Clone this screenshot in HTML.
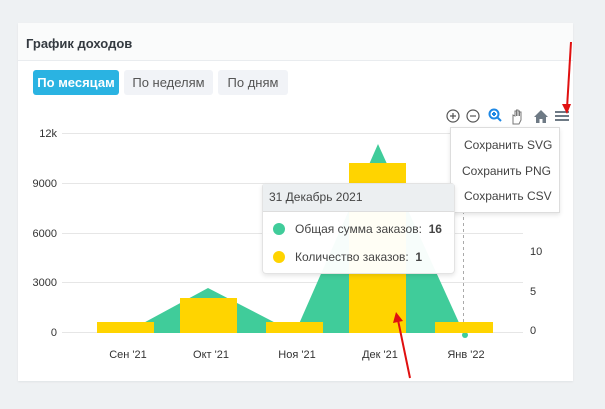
<!DOCTYPE html>
<html><head><meta charset="utf-8"><style>
body{margin:0;width:605px;height:409px;background:#eef1f3;font-family:"Liberation Sans",sans-serif;position:relative;overflow:hidden}
.card{position:absolute;left:18px;top:23px;width:555px;height:358px;background:#fff;box-shadow:0 1px 2px rgba(0,0,0,.06)}
.hdr{height:37px;border-bottom:1px solid #e9ecef;background:#fafbfb}
.hdr span{position:absolute;left:8px;top:13px;font-size:13px;font-weight:bold;color:#343a40}
.btn{position:absolute;top:47px;height:25px;border-radius:3px;font-size:13px;line-height:25px;text-align:center;background:#f1f3f7;color:#555}
.t{position:absolute;font-size:11px;color:#333}
</style></head><body>
<div class="card">
<div class="hdr"><span>График доходов</span></div>
<div class="btn" style="left:15px;width:86px;background:#2ab3e2;color:#fff;font-weight:bold">По месяцам</div>
<div class="btn" style="left:106px;width:89px">По неделям</div>
<div class="btn" style="left:200px;width:70px">По дням</div>
</div>
<svg width="605" height="409" style="position:absolute;left:0;top:0">
<g stroke="#e6e6e6" stroke-width="1">
<line x1="62" y1="133.5" x2="523" y2="133.5"/><line x1="62" y1="183.5" x2="523" y2="183.5"/>
<line x1="62" y1="233.5" x2="523" y2="233.5"/><line x1="62" y1="282.5" x2="523" y2="282.5"/>
<line x1="62" y1="332.5" x2="523" y2="332.5"/></g>
<line x1="463.5" y1="211" x2="463.5" y2="333" stroke="#aaa" stroke-dasharray="3,3"/>
<polygon points="125,333 208,288 295,333 378,144 465,336 465,333" fill="#40cc9a"/>
<circle cx="465" cy="335" r="3" fill="#40cc9a"/>
<g fill="#ffd400">
<rect x="97" y="322" width="57" height="11"/><rect x="180" y="298" width="57" height="35"/>
<rect x="266" y="322" width="57" height="11"/><rect x="349" y="163" width="57" height="170"/>
<rect x="435" y="322" width="58" height="11"/></g>
<g font-family="Liberation Sans" font-size="11" fill="#333">
<text x="57" y="137" text-anchor="end">12k</text><text x="57" y="187" text-anchor="end">9000</text>
<text x="57" y="237" text-anchor="end">6000</text><text x="57" y="286" text-anchor="end">3000</text>
<text x="57" y="336" text-anchor="end">0</text>
<text x="530" y="334">0</text><text x="530" y="295">5</text><text x="530" y="255">10</text>
<text x="128" y="358" text-anchor="middle">Сен '21</text><text x="211" y="358" text-anchor="middle">Окт '21</text>
<text x="297" y="358" text-anchor="middle">Ноя '21</text><text x="380" y="358" text-anchor="middle">Дек '21</text>
<text x="466" y="358" text-anchor="middle">Янв '22</text></g>
<g stroke="#555" stroke-width="1.2" fill="none">
<circle cx="453" cy="116" r="6"/><path d="M450 116h6M453 113v6"/>
<circle cx="473" cy="116" r="6"/><path d="M470 116h6"/></g>
<g stroke="#1e88e5" stroke-width="2" fill="none"><circle cx="494" cy="114" r="4.5"/><path d="M497 117l4 4M492 114h4M494 112v4"/></g>
<path d="M513 122v-7l2 1v-5h1.5v5v-6h1.5v6v-5h1.5v5v-4h1.5v8l-2 4h-6z" fill="none" stroke="#777" stroke-width="1"/>
<path d="M534 117l7-7 7 7h-2v6h-3.5v-4h-3v4h-3.5v-6z" fill="#6e7a85"/>
<g stroke="#6e7a85" stroke-width="2"><path d="M555 112h14M555 116h14M555 120h14"/></g>
</svg>
<div style="position:absolute;left:450px;top:127px;width:108px;height:84px;background:#fff;border:1px solid #ddd;box-shadow:0 2px 4px rgba(0,0,0,.1);font-size:12px;color:#444">
<div style="position:absolute;left:13px;top:10px">Сохранить SVG</div>
<div style="position:absolute;left:11px;top:36px">Сохранить PNG</div>
<div style="position:absolute;left:13px;top:61px">Сохранить CSV</div></div>
<div style="position:absolute;left:262px;top:183px;width:191px;height:89px;background:rgba(255,255,255,.96);border:1px solid #e3e3e3;border-radius:4px;box-shadow:0 2px 5px rgba(0,0,0,.1);font-size:12px;color:#444">
<div style="height:27px;background:#eceff1;border-bottom:1px solid #ddd;line-height:27px;padding-left:6px">31 Декабрь 2021</div>
<div style="position:absolute;left:10px;top:39px;width:12px;height:12px;border-radius:6px;background:#40cc9a"></div>
<div style="position:absolute;left:32px;top:38px">Общая сумма заказов: &nbsp;<b>16</b></div>
<div style="position:absolute;left:10px;top:67px;width:12px;height:12px;border-radius:6px;background:#ffd400"></div>
<div style="position:absolute;left:32px;top:66px">Количество заказов: &nbsp;<b>1</b></div></div>
<svg width="605" height="409" style="position:absolute;left:0;top:0">
<path d="M571 42L567 108" stroke="#e01010" stroke-width="2"/><path d="M562 104l5 10 4-10z" fill="#e01010"/>
<path d="M410 378L398 320" stroke="#e01010" stroke-width="2"/><path d="M393 323l3-11 7 9z" fill="#e01010"/>
</svg>
</body></html>
